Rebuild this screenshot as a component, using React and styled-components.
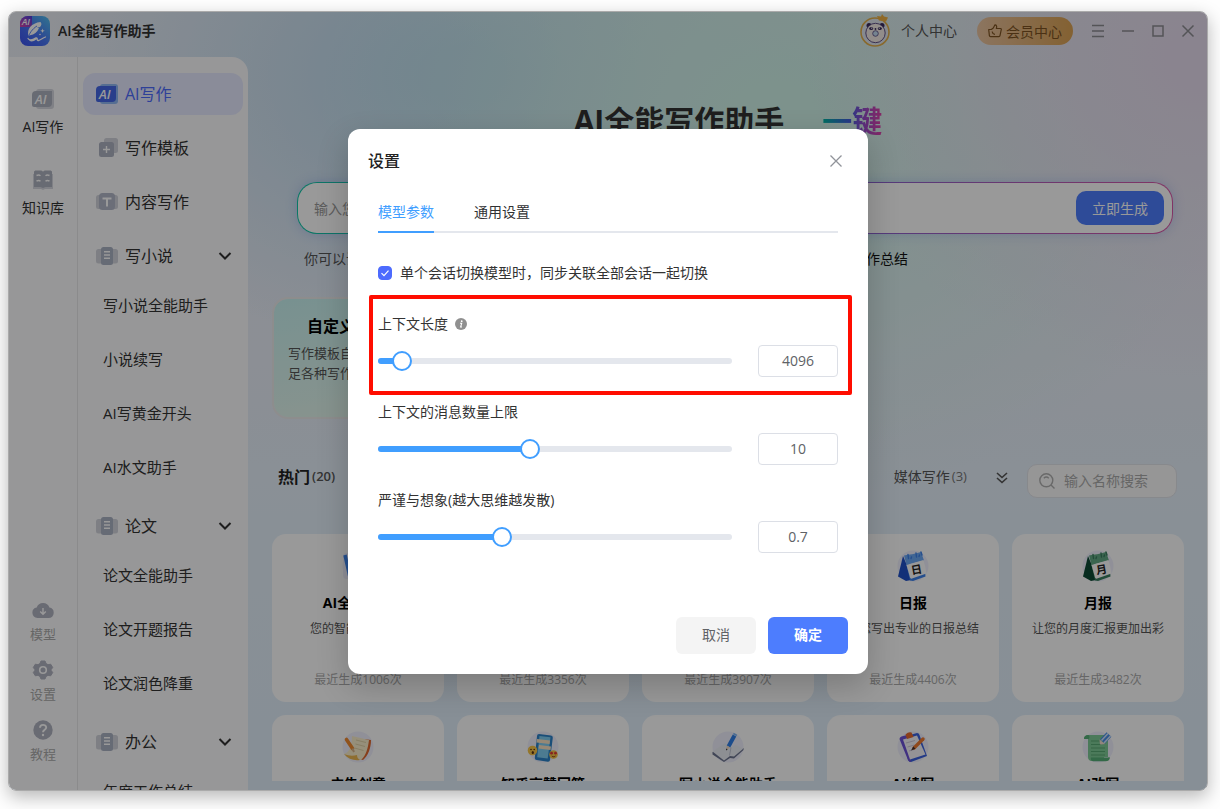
import React, { useState } from 'react';
import styled, { createGlobalStyle, css } from 'styled-components';

const menuTop = [
  { icon: 'ai', label: 'AI写作', active: true },
  { icon: 'template', label: '写作模板' },
  { icon: 'text', label: '内容写作' },
];

const menuGroups = [
  { label: '写小说', items: ['写小说全能助手', '小说续写', 'AI写黄金开头', 'AI水文助手'] },
  { label: '论文', items: ['论文全能助手', '论文开题报告', '论文润色降重'] },
  { label: '办公', items: ['年度工作总结'] },
];

const tips = ['写一篇公众号推文', '生成短视频脚本稿', '小红书的种草文案', '季度部门工作总结'];

const templates = [
  { title: '自定义写作模板', text: '写作模板自定义生成，满足各种写作需求' },
  { title: '全能写作模板', text: '海量写作模板，一键生成优质内容' },
  { title: '热门写作模板', text: '精选热门模板，轻松完成写作' },
];

const categories = [
  { name: '热门', count: 20, active: true },
  { name: '职场办公', count: 12 },
  { name: '论文写作', count: 8 },
  { name: '小说创作', count: 6 },
  { name: '媒体写作', count: 3 },
];

const tools = [
  { icon: 'word', title: 'AI全能助手', text: '您的智能写作助手', used: 1006 },
  { icon: 'book', title: '工作总结', text: '快速生成工作总结', used: 3356 },
  { icon: 'notes', title: '周报', text: '帮您写出专业的周报总结', used: 3907 },
  { icon: 'day', title: '日报', text: '帮您写出专业的日报总结', used: 4406 },
  { icon: 'month', title: '月报', text: '让您的月度汇报更加出彩', used: 3482 },
  { icon: 'notes', title: '广告创意' },
  { icon: 'phone', title: '知乎高赞回答' },
  { icon: 'book', title: '写小说全能助手' },
  { icon: 'clipboard', title: 'AI续写' },
  { icon: 'scroll', title: 'AI改写' },
];

const settings = [
  { id: 'context', label: '上下文长度', min: 1024, max: 46080, step: 1, info: true, marked: true },
  { id: 'messages', label: '上下文的消息数量上限', min: 1, max: 22, step: 1 },
  { id: 'temperature', label: '严谨与想象(越大思维越发散)', min: 0, max: 2, step: 0.1 },
];

export default function App() {
  const [values, setValues] = useState({ context: 4096, messages: 10, temperature: 0.7 });
  const [sync, setSync] = useState(true);

  const handleChange = (e) => {
    const { name, value } = e.target;
    setValues({ ...values, [name]: value });
  };

  return (
    <Page>
      <GlobalStyle />
      <Window>
        <TitleBar>
          <Logo />
          <AppName>AI全能写作助手</AppName>
          <Avatar />
          <TextButton>个人中心</TextButton>
          <VipButton><ThumbIcon />会员中心</VipButton>
          <WindowButtons>
            <WindowButton aria-label="菜单"><svg width="14" height="14" viewBox="0 0 14 14"><path d="M1 1.5h12M1 7h12M1 12.5h12" /></svg></WindowButton>
            <WindowButton aria-label="最小化"><svg width="14" height="14" viewBox="0 0 14 14"><path d="M1 7h12" /></svg></WindowButton>
            <WindowButton aria-label="最大化"><svg width="14" height="14" viewBox="0 0 14 14"><path d="M2 2h10v10H2z" /></svg></WindowButton>
            <WindowButton aria-label="关闭"><svg width="14" height="14" viewBox="0 0 14 14"><path d="M1.5 1.5l11 11M12.5 1.5l-11 11" /></svg></WindowButton>
          </WindowButtons>
        </TitleBar>

        <Columns>
          <Rail>
            <RailButton $top><AiIcon color="#aeb2c0" back="#d6d8e0" />AI写作</RailButton>
            <RailButton $top><LibraryIcon />知识库</RailButton>
            <RailBottom>
              <RailButton><CloudIcon />模型</RailButton>
              <RailButton><GearIcon />设置</RailButton>
              <RailButton><HelpIcon />教程</RailButton>
            </RailBottom>
          </Rail>

          <Menu>
            {menuTop.map((item) => (
              <MenuItem key={item.label} $active={item.active}>
                <MenuIcon name={item.icon} />
                <span>{item.label}</span>
              </MenuItem>
            ))}
            {menuGroups.map((group) => (
              <div key={group.label}>
                <MenuItem $group>
                  <MenuIcon name="doc" />
                  <span>{group.label}</span>
                  <Chevron width="14" height="14" viewBox="0 0 14 14">
                    <path d="M1.5 4L7 9.5 12.500 4" />
                  </Chevron>
                </MenuItem>
                <SubMenu>
                  {group.items.map((name) => <SubItem key={name}>{name}</SubItem>)}
                </SubMenu>
              </div>
            ))}
          </Menu>

          <Main>
            <Hero>AI全能写作助手<HeroAccent>一键</HeroAccent></Hero>
            <Prompt>
              <PromptInput aria-label="写作主题" placeholder="输入您想写的主题" />
              <PromptButton>立即生成</PromptButton>
            </Prompt>
            <Tips>
              <span>你可以试试：</span>
              {tips.map((tip) => <a href="#tip" key={tip}>{tip}</a>)}
            </Tips>
            <Templates>
              {templates.map((item) => (
                <Template key={item.title}>
                  <h3>{item.title}</h3>
                  <p>{item.text}</p>
                </Template>
              ))}
            </Templates>
            <FilterRow>
              <Categories>
                {categories.map((item) => (
                  <Category key={item.name} $active={item.active}>
                    {item.name}<small>({item.count})</small>
                  </Category>
                ))}
              </Categories>
              <MoreButton aria-label="更多">
                <svg width="14" height="14" viewBox="0 0 14 14"><path d="M2 2l5 4.500L12 2M2 7l5 4.500L12 7" /></svg>
              </MoreButton>
              <SearchBox>
                <svg width="16" height="16" viewBox="0 0 16 16">
                  <circle cx="7.300" cy="7.300" r="6.500" />
                  <path d="M12 12l3.500 3.500M4.800 5.200a3.600 3.600 0 0 1 5 0" />
                </svg>
                <input aria-label="搜索" placeholder="输入名称搜索" />
              </SearchBox>
            </FilterRow>
            <ToolGrid>
              {tools.map((tool) => (
                <Tool key={tool.title}>
                  <ToolIcon name={tool.icon} />
                  <h4>{tool.title}</h4>
                  {tool.text && <p>{tool.text}</p>}
                  {tool.used && <small>最近生成{tool.used}次</small>}
                </Tool>
              ))}
            </ToolGrid>
          </Main>
        </Columns>

        <Overlay>
          <Dialog role="dialog" aria-label="设置">
            <DialogHeader>
              <h2>设置</h2>
              <CloseButton aria-label="关闭设置">
                <svg width="12" height="12" viewBox="0 0 12 12"><path d="M0.500 0.500l11 11M11.500 0.500l-11 11" /></svg>
              </CloseButton>
            </DialogHeader>
            <DialogBody>
              <Tabs>
                <Tab $active>模型参数</Tab>
                <Tab>通用设置</Tab>
              </Tabs>
              <CheckRow>
                <input type="checkbox" checked={sync} onChange={() => setSync(!sync)} />
                单个会话切换模型时，同步关联全部会话一起切换
              </CheckRow>
              {settings.map((item) => (
                <Setting key={item.id}>
                  <SettingLabel htmlFor={item.id}>
                    {item.label}
                    {item.info && <InfoIcon />}
                  </SettingLabel>
                  <SettingRow>
                    <Slider>
                      <Fill style={{ width: `${((values[item.id] - item.min) / (item.max - item.min)) * 100}%` }} />
                      <input
                        type="range"
                        id={item.id}
                        name={item.id}
                        min={item.min}
                        max={item.max}
                        step={item.step}
                        value={values[item.id]}
                        onChange={handleChange}
                      />
                    </Slider>
                    <NumberInput name={item.id} aria-label={item.label} value={values[item.id]} onChange={handleChange} />
                  </SettingRow>
                  {item.marked && <Marker />}
                </Setting>
              ))}
            </DialogBody>
            <DialogFooter>
              <DialogButton>取消</DialogButton>
              <DialogButton $primary>确定</DialogButton>
            </DialogFooter>
          </Dialog>
        </Overlay>
      </Window>
    </Page>
  );
}

function Logo() {
  return (
    <svg width="30" height="30" viewBox="0 0 30 30">
      <defs>
        <linearGradient id="logoBg" x1="0" y1="1" x2="1" y2="0">
          <stop offset="0" stopColor="#3c50f0" />
          <stop offset="0.500" stopColor="#4a78f5" />
          <stop offset="1" stopColor="#52c4f0" />
        </linearGradient>
        <linearGradient id="logoTag" x1="0" y1="1" x2="1" y2="0">
          <stop offset="0" stopColor="#d845a8" />
          <stop offset="1" stopColor="#4a3fe0" />
        </linearGradient>
        <clipPath id="logoClip"><rect width="30" height="30" rx="8" /></clipPath>
      </defs>
      <g clipPath="url(#logoClip)">
        <rect width="30" height="30" fill="url(#logoBg)" />
        <path d="M0 0h12v8a3 3 0 0 1-3 3H0z" fill="url(#logoTag)" />
        <path d="M8.500 20c-2-7 3-13 12-14 1.500 1.500 1 3.500-.5 5l-3 .7 2 .6c-2 4-4.500 6.300-9 7z" fill="#fff" />
        <path d="M8 22c1-4 4-9 9-12" stroke="#4a78f5" strokeWidth="0.900" fill="none" />
        <path d="M8 22.500c2 3.500 6 0 8-.5 2.500-.5 0 3 2.500 2.500 2-.4 4-2.500 7-3.500M10 24.500c2 .8 4 0 6-1.500" stroke="#fff" strokeWidth="1.300" fill="none" strokeLinecap="round" />
        <path d="M22.500 12.500l.6 1.700 1.700.6-1.700.6-.6 1.700-.6-1.700-1.700-.6 1.700-.6z" fill="#fff" />
        <circle cx="20" cy="18.500" r="0.800" fill="#fff" />
        <text x="2" y="9" fontSize="9" fontWeight="600" fontStyle="italic" fill="#fff">AI</text>
      </g>
    </svg>
  );
}

function Avatar() {
  return (
    <svg width="32" height="36" viewBox="0 0 32 36">
      <circle cx="16" cy="19" r="14" fill="#dfe6ee" stroke="#e3b04c" strokeWidth="1.600" />
      <circle cx="10" cy="12.500" r="2.500" fill="#3a2a5c" />
      <circle cx="23" cy="12.500" r="2.500" fill="#3a2a5c" />
      <circle cx="16.500" cy="20" r="9.700" fill="#f3ece6" stroke="#51407a" strokeWidth="0.900" />
      <ellipse cx="12.200" cy="15.500" rx="2" ry="1.600" fill="#3a2a5c" />
      <ellipse cx="20.800" cy="15.500" rx="2" ry="1.600" fill="#3a2a5c" />
      <circle cx="12.700" cy="15.200" r="0.600" fill="#fff" />
      <circle cx="20.300" cy="15.200" r="0.600" fill="#fff" />
      <circle cx="16.500" cy="16" r="0.900" fill="#3a2a5c" />
      <circle cx="16.500" cy="20.500" r="2.800" fill="#c3dcf0" stroke="#51407a" strokeWidth="0.800" />
      <path d="M18 3l4 .5 1-2.500 2 2.500 4 1-2 4-7-1z" fill="#eeb044" />
    </svg>
  );
}

function ThumbIcon() {
  return (
    <svg width="14" height="14" viewBox="0 0 14 14" fill="none" stroke="#7d5322" strokeWidth="1.200" strokeLinejoin="round">
      <path d="M.7 5.500h2.600l2-1.500L7 .8c1.600 0 2 1.500 1.300 3.700h4.200c.7 0 .9.500.8 1L12 11.700c-.1.600-.5.900-1.100.900H2.500c-.6 0-1-.3-1.100-.9z" />
      <path d="M4.200 7.500c.3 2 1.300 2.800 2.800 2.800" />
    </svg>
  );
}

function AiIcon({ color, back }) {
  return (
    <svg width="24" height="22" viewBox="0 0 24 22">
      <rect x="5" y="1" width="18" height="20" rx="3" fill={back} />
      <path d="M5 3h16v12a4 4 0 0 1-4 4H3a2 2 0 0 1-2-2V7a4 4 0 0 1 4-4z" fill={color} />
      <text x="4" y="16" fontSize="13" fontWeight="600" fontStyle="italic" fill="#fff">AI</text>
    </svg>
  );
}

function LibraryIcon() {
  return (
    <svg width="24" height="22" viewBox="0 0 24 22">
      <path d="M2 5h20v15h-8l-2 1-2-1H2z" fill="#d6d8e0" />
      <path d="M3 3c0-1 1-1.500 2-1.500h4c1.500 0 2.500.5 3 1.300.5-.8 1.500-1.300 3-1.300h4c1 0 2 .5 2 1.500V18h-6.500l-2.500 1-2.500-1H3z" fill="#aeb2c0" />
      <path d="M5.500 6.500c1.500-.7 3-.7 4 .2M5.500 12c1.500-.7 3-.7 4 .2M14.500 6.700c1-.9 2.500-.9 4-.2M14.500 12.200c1-.9 2.500-.9 4-.2" stroke="#fff" strokeWidth="1.400" fill="none" />
    </svg>
  );
}

function CloudIcon() {
  return (
    <svg width="22" height="20" viewBox="0 0 22 20">
      <path d="M5.500 18a5.300 5.300 0 0 1-.8-10.500 6.700 6.700 0 0 1 12.700 0A5.300 5.300 0 0 1 16.500 18z" fill="#b0b2c0" />
      <path d="M11 8v6M8.200 11.500L11 14.300l2.800-2.800" stroke="#fff" strokeWidth="1.400" fill="none" />
    </svg>
  );
}

function GearIcon() {
  return (
    <svg width="22" height="20" viewBox="0 0 22 20">
      <path d="M9 1h4l1 2.500 2 1.200 2.700-.5 2 3.300-1.500 2v1l1.500 2-2 3.300-2.700-.5-2 1.200-1 2.500H9l-1-2.500-2-1.200-2.700.5-2-3.300 1.500-2v-1l-1.500-2 2-3.300 2.700.5 2-1.200z" fill="#b0b2c0" stroke="#b0b2c0" strokeLinejoin="round" />
      <circle cx="11" cy="10" r="3.300" fill="none" stroke="#fff" strokeWidth="1.600" />
    </svg>
  );
}

function HelpIcon() {
  return (
    <svg width="22" height="20" viewBox="0 0 22 20">
      <circle cx="11" cy="10" r="9.700" fill="#b0b2c0" />
      <path d="M8 7.800c0-4 6.200-3.800 6.200-.3 0 2.200-3.200 2.300-3.200 4.700" stroke="#fff" strokeWidth="1.900" fill="none" />
      <circle cx="11" cy="15" r="1.200" fill="#fff" />
    </svg>
  );
}

function MenuIcon({ name }) {
  if (name === 'ai') return <AiIcon color="#4568e8" back="#8fb8f4" />;
  return (
    <svg width="24" height="22" viewBox="0 0 24 22">
      {name === 'template' && (
        <>
          <rect x="9" y="1" width="14" height="15" rx="2.500" fill="#d2d4dc" />
          <rect x="4" y="5" width="15" height="15" rx="2.500" fill="#aeb2c2" />
          <path d="M11.500 9v7M8 12.500h7" stroke="#fff" strokeWidth="1.400" />
        </>
      )}
      {name === 'text' && (
        <>
          <rect x="1" y="4" width="22" height="14" rx="2.500" fill="#d2d4dc" />
          <rect x="4" y="2" width="16" height="17" rx="3.500" fill="#b2b7c8" />
          <path d="M7.500 7.500h9M12 7.500v8" stroke="#fff" strokeWidth="2" />
        </>
      )}
      {name === 'doc' && (
        <>
          <rect x="1" y="4" width="22" height="14.500" rx="2.500" fill="#d2d4dc" />
          <rect x="6" y="2" width="12" height="18" rx="2.500" fill="#aab2c4" />
          <path d="M9 6.800h6M9 10h6M9 13.200h6" stroke="#fff" strokeWidth="1.500" />
        </>
      )}
    </svg>
  );
}

function InfoIcon() {
  return (
    <svg width="12" height="12" viewBox="0 0 12 12">
      <circle cx="6" cy="6" r="6" fill="#909090" />
      <circle cx="6.700" cy="3.200" r="0.900" fill="#fff" />
      <path d="M5 5.300h1.700L5.600 9H7" stroke="#fff" strokeWidth="1.100" fill="none" />
    </svg>
  );
}

function Calendar({ dark, mid, light, sign }) {
  return (
    <>
      <path d="M6 6L1 26.500 9 31l5-1L9 13z" fill={dark} />
      <path d="M9 13l4 17.500 3 .5 12.500-4.500L28 22z" fill={mid} />
      <path d="M7 5.500c5-1 11-1.500 17-3.500l3 8.500L9.500 15z" fill={light} />
      <path d="M9.500 15L26.500 10q2 7 3 13.500L15 28.500q-1.500.5-2-1z" fill="#fff" />
      <path d="M11 4.500l.5 4M14 8.500l.5-1.500M19 3l.5 4M22 6.500l.5-1.500M24 2l1 3" stroke={mid} strokeWidth="1.400" strokeLinecap="round" />
      <text x="14" y="23.500" fontSize="11" fontWeight="700" fill="#222" transform="rotate(-10 20 19)">{sign}</text>
    </>
  );
}

function ToolIcon({ name }) {
  return (
    <svg width="32" height="32" viewBox="0 0 32 32">
      <circle cx="16" cy="16" r="15.500" fill="#f0f1fd" />
      {name === 'day' && <Calendar dark="#1f50c8" mid="#3c82ec" light="#6ca8f6" sign="日" />}
      {name === 'month' && <Calendar dark="#0c4a34" mid="#3a7e60" light="#62a884" sign="月" />}
      {name === 'word' && (
        <>
          <rect x="1" y="3" width="28" height="26" rx="4" fill="#f0f1fd" />
          <path d="M3 5l4 18 6-12 4 12 5-18" stroke="#3f86ee" strokeWidth="3.500" fill="none" />
        </>
      )}
      {name === 'notes' && (
        <>
          <path d="M22 8l7 1c0 8-3 16-8 20l-4-1z" fill="#e0682e" />
          <path d="M10 5l17 4c-1 8-3 16-8 20-6-1-12-2-17-6 5-1 8-8 8-18z" fill="#fbeecb" />
          <path d="M2 23c5 2 9 2 13 1 0 2 1 4 3 5-6 1-12-1-16-6z" fill="#edb850" />
          <path d="M14 9l10 2.500M13.500 13l9.500 2.500M12.500 17l9 2.500" stroke="#e0d2a8" strokeWidth="1" />
          <path d="M4.500 8.500l6 9" stroke="#f08a30" strokeWidth="3.600" strokeLinecap="round" />
          <path d="M10.500 17.500l1.500 3.500" stroke="#d8b48c" strokeWidth="2" />
        </>
      )}
      {name === 'phone' && (
        <>
          <path d="M12 3l12 1.500a2 2 0 0 1 1.800 2.200L23 29a2 2 0 0 1-2.200 1.800L9.500 29a2 2 0 0 1-1.700-2.300L10 5a2 2 0 0 1 2-2z" fill="#2c83c8" />
          <path d="M12.500 5l11 1.300-2.800 21.200-10.500-1.300z" fill="#7fcdf2" />
          <path d="M10 8l13 1.500-.5 3.500-13-1.500zM12 14l12 1.500-.5 3.500-12-1.500z" fill="#fbe3c4" />
          <circle cx="5.500" cy="19.500" r="4.800" fill="#f7c548" />
          <circle cx="26.500" cy="23.500" r="4.300" fill="#f7c548" />
          <circle cx="4" cy="18.500" r="0.800" fill="#5a3210" />
          <circle cx="7.200" cy="18.500" r="0.800" fill="#5a3210" />
          <ellipse cx="5.800" cy="21.500" rx="1.100" ry="1.500" fill="#5a3210" />
          <circle cx="24.600" cy="22.200" r="1.400" fill="#e33a38" />
          <circle cx="28.500" cy="22.200" r="1.400" fill="#e33a38" />
          <path d="M24.800 25c1 1 2.600 1 3.600 0" stroke="#8a3010" strokeWidth="1" fill="none" />
        </>
      )}
      {name === 'book' && (
        <>
          <path d="M.5 21v2.500L12 31l6-4 4 .5L31.500 19v-2z" fill="#6d7590" />
          <path d="M.5 20.500L13 12l6 4 5-2 7.500 3.500L22 25.500l-4-.5-6 4.500z" fill="#eceef6" />
          <path d="M19 16.500l-1.500 8" stroke="#c2c7d6" strokeWidth="1" fill="none" />
          <path d="M22.500 4.500l-6 11" stroke="#2f7fe8" strokeWidth="4" />
          <path d="M23.500 2.800l-.8 1.500" stroke="#7fb6f6" strokeWidth="4" />
          <path d="M14.800 14.500l3.400 2-4 2.500z" fill="#f0d8c0" />
          <path d="M14 17.500l.2 2 1.500-.9z" fill="#333" />
        </>
      )}
      {name === 'clipboard' && (
        <>
          <path d="M6 6L20 2q2 0 2.500 2L30 25 14 31q-2 0-3-2z" fill="#3b62e0" />
          <path d="M2.500 8q0-2 2-2.500L10 4l4 27q-2 0-3-2z" fill="#6c50d8" />
          <path d="M6 8.500L20 4.500l8.500 19-15.500 5z" fill="#f7f5fa" />
          <path d="M8.500 3.500q3-3 6-2l2 4.500-6.500 2z" fill="#e8692c" />
          <path d="M9 12l9-2.500M10.500 16l7-2M12 20l5-1.500" stroke="#cfc9da" strokeWidth="1" />
          <path d="M26 8L17 17" stroke="#ee7a30" strokeWidth="3.400" strokeLinecap="round" />
          <path d="M16.300 15.500l2.200 2.200-4.500 1.800z" fill="#403030" />
        </>
      )}
      {name === 'scroll' && (
        <>
          <path d="M2 8c0-3 2-4 4-4h18c-2 1-2 2-2 4v18c0 2 2 2 5.500 0-.5 3-2 4-4.500 4H10c-3 0-4-2-4-4V8z" fill="#7ecb96" />
          <path d="M2 8c0-3 2-4 4-4 1.500 0 2 2 1 4zM9 26.500h19c-.5 3-2 3.700-4.500 3.700H11c-2 0-2.500-2-2-3.700z" fill="#56b077" />
          <path d="M22 9l4-1v18h-4z" fill="#7ecb96" />
          <path d="M9 10h9M9 13.500h10M9 17h14M9 20.500h14M9 24h14" stroke="#58a873" strokeWidth="1" />
          <path d="M27 3.500l-6.500 7" stroke="#4a90ea" strokeWidth="6.500" />
          <path d="M26 2.500l-6.500 7" stroke="#d5e6fb" strokeWidth="1.500" />
          <path d="M28.500 5l-6.500 7" stroke="#d5e6fb" strokeWidth="1.500" />
          <path d="M17.500 8.500l5.500 4.500-5 .5z" fill="#f4ded2" />
        </>
      )}
    </svg>
  );
}

const GlobalStyle = createGlobalStyle`
  * {
    box-sizing: border-box;
  }

  body {
    margin: 0;
    background: #fefefe;
    font-family: 'Open Sans', 'Noto Sans CJK SC', sans-serif;
    font-size: 14px;
    color: #333;
  }

  h2, h3, h4, p {
    margin: 0;
  }

  button, input {
    font: inherit;
    color: inherit;
    margin: 0;
    padding: 0;
    border: none;
    background: none;
    outline: none;
  }

  button {
    cursor: pointer;
    white-space: nowrap;
  }

  a {
    color: inherit;
    text-decoration: none;
  }

  svg {
    flex: none;
  }
`;

const Page = styled.div`
  height: 100vh;
  padding: 11px 12px 18px 8px;
  overflow: hidden;
`;

const Window = styled.div`
  position: relative;
  display: flex;
  flex-direction: column;
  height: 100%;
  border: 1px solid #aaa;
  border-radius: 8px;
  overflow: hidden;
  box-shadow: 0 6px 18px rgba(0, 0, 0, 0.28);
  background:
    radial-gradient(ellipse 400px 320px at 100% 6%, #e6dcee 5%, rgba(230, 220, 238, 0) 100%),
    radial-gradient(ellipse 460px 380px at 64% 14%, #d0f3ea 10%, rgba(208, 243, 234, 0) 100%),
    radial-gradient(ellipse 420px 280px at 38% 8%, #bcdaee 10%, rgba(188, 218, 238, 0) 100%),
    linear-gradient(180deg, #ebeef6 0%, #e9eef8 45%, #e5f1fb 65%, #e1eefb 100%);
`;

const TitleBar = styled.header`
  display: flex;
  align-items: center;
  height: 45px;
  padding: 0 4px 7px 11px;
`;

const AppName = styled.span`
  margin: 0 auto 0 8px;
  padding-bottom: 2px;
  font-weight: 600;
`;

const TextButton = styled.button`
  margin: 0 20px 0 10px;
  padding-bottom: 2px;
  color: #555;
`;

const VipButton = styled.button`
  display: flex;
  align-items: center;
  gap: 4px;
  height: 28px;
  padding: 0 11px;
  border-radius: 14px;
  background: linear-gradient(90deg, #e9c3a0, #dba254);
  color: #7d5322;
`;

const WindowButtons = styled.div`
  display: flex;
  margin-left: 10px;
`;

const WindowButton = styled.button`
  display: grid;
  place-items: center;
  width: 30px;
  height: 30px;

  svg {
    fill: none;
    stroke: #8c8c92;
    stroke-width: 1.5;
  }
`;

const Columns = styled.div`
  display: flex;
  flex: 1;
  min-height: 0;
`;

const Rail = styled.nav`
  display: flex;
  flex-direction: column;
  gap: 23px;
  width: 69px;
  padding: 31px 0 26px;
  border-right: 1px solid #e8e8ea;
  background: #fcfcfd;
`;

const RailButton = styled.button`
  display: flex;
  flex-direction: column;
  align-items: center;
  width: 100%;
  gap: 4px;
  line-height: 20px;
  color: #aaa;
  font-size: 13px;

  ${(props) => props.$top && css`
    height: 58px;
    gap: 2px;
    line-height: 30px;
    color: #333;
    font-size: 14px;
  `}
`;

const RailBottom = styled.div`
  display: flex;
  flex-direction: column;
  gap: 16px;
  margin-top: auto;
`;

const Menu = styled.nav`
  width: 170px;
  padding: 16px 5px 0;
  border-top-right-radius: 16px;
  background: #fcfcfd;
  overflow: hidden;
`;

const MenuItem = styled.button`
  display: flex;
  align-items: center;
  gap: 6px;
  width: 100%;
  height: 42px;
  margin-bottom: ${(props) => (props.$group ? '0' : '12px')};
  padding: 0 11px 0 12px;
  border-radius: 12px;
  background: ${(props) => (props.$active ? '#e7eaff' : 'none')};
  color: ${(props) => (props.$active ? '#4d6bfe' : '#333')};
  font-size: 16px;

  span {
    padding-bottom: 2px;
  }
`;

const Chevron = styled.svg`
  margin-left: auto;
  fill: none;
  stroke: #333;
  stroke-width: 2;
`;

const SubMenu = styled.div`
  margin: 1px 0 11px;
`;

const SubItem = styled.button`
  display: block;
  width: 100%;
  height: 54px;
  padding: 0 0 2px 20px;
  font-size: 15px;
  text-align: left;
`;

const Main = styled.main`
  display: flex;
  flex-direction: column;
  flex: 1;
  min-width: 0;
  padding: 42px 23px 9px 24px;
`;

const Hero = styled.div`
  display: flex;
  justify-content: center;
  gap: 38px;
  line-height: 44px;
  font-size: 30px;
  font-weight: 700;
`;

const HeroAccent = styled.span`
  background: linear-gradient(90deg, #00b8a0, #3f5fe0 45%, #8a4fd0 65%, #e040a8);
  background-clip: text;
  color: transparent;
`;

const Prompt = styled.div`
  display: flex;
  align-items: center;
  height: 52px;
  margin: 39px 11px 0 25px;
  padding: 0 8px 0 16px;
  border: 1px solid transparent;
  border-radius: 20px;
  background:
    linear-gradient(#fff, #fff) padding-box,
    linear-gradient(90deg, #10c8a8, #6a68e0 50%, #d858a8) border-box;
  box-shadow: 0 0 12px rgba(90, 130, 230, 0.3);
`;

const PromptInput = styled.input`
  flex: 1;
  min-width: 0;

  &::placeholder {
    color: #999;
  }
`;

const PromptButton = styled.button`
  width: 88px;
  height: 34px;
  border-radius: 10px;
  background: #4d7dfe;
  color: #fff;
`;

const Tips = styled.div`
  display: flex;
  gap: 18px;
  margin: 15px 0 0 32px;
  line-height: 20px;
  white-space: nowrap;
  color: #555;

  a {
    color: #111;
  }
`;

const Templates = styled.div`
  display: flex;
  gap: 15px;
  margin-top: 28px;
`;

const Template = styled.article`
  width: 182px;
  height: 122px;
  padding: 15px 14px;
  border: 2px solid #ecebeb;
  border-radius: 16px;
  background: linear-gradient(170deg, #c8f2f1, #e6f6ec) padding-box;

  h3 {
    color: #000;
    font-size: 16px;
    line-height: 24px;
    text-align: center;
  }

  p {
    margin-top: 5px;
    color: #555;
    font-size: 13px;
    line-height: 20px;
  }
`;

const FilterRow = styled.div`
  display: flex;
  align-items: flex-start;
  margin: 45px 7px 0 6px;
`;

const Categories = styled.div`
  display: flex;
  flex: 1;
  justify-content: space-between;
`;

const Category = styled.button`
  display: flex;
  align-items: center;
  gap: 2px;
  height: 26px;
  padding-bottom: 2px;
  color: #555;

  small {
    font-size: 13px;
    color: #777;
  }

  ${(props) => props.$active && css`
    color: #222;
    font-size: 16px;
    font-weight: 600;

    small {
      color: #555;
    }
  `}
`;

const MoreButton = styled.button`
  display: grid;
  place-items: center;
  width: 14px;
  height: 28px;
  margin: 0 18px 0 28px;

  svg {
    fill: none;
    stroke: #555;
    stroke-width: 1.6;
  }
`;

const SearchBox = styled.label`
  display: flex;
  align-items: center;
  gap: 9px;
  width: 150px;
  height: 34px;
  padding: 0 11px;
  border: 1px solid #e2e4ea;
  border-radius: 10px;
  background: #fafafa;

  svg {
    fill: none;
    stroke: #b0b0b0;
    stroke-width: 1.4;
  }

  input {
    width: 100%;
    min-width: 0;
    padding-bottom: 2px;
  }

  input::placeholder {
    color: #aaa;
  }
`;

const ToolGrid = styled.div`
  display: grid;
  flex: 1;
  grid-template-columns: repeat(5, 1fr);
  grid-auto-rows: 168px;
  gap: 13px;
  min-height: 0;
  margin-top: 36px;
  overflow: hidden;
`;

const Tool = styled.article`
  display: flex;
  flex-direction: column;
  align-items: center;
  padding: 16px 8px 12px;
  border-radius: 14px;
  background: #fff;
  line-height: 20px;

  h4 {
    margin-top: 11px;
    color: #000;
    font-size: 14px;
  }

  p {
    margin-top: 6px;
    color: #555;
    font-size: 12px;
    white-space: nowrap;
  }

  small {
    margin-top: auto;
    color: #aaa;
    font-size: 12px;
  }
`;

const Overlay = styled.div`
  position: absolute;
  inset: 0;
  display: flex;
  align-items: center;
  justify-content: center;
  background: rgba(0, 0, 0, 0.4);
`;

const Dialog = styled.section`
  width: 520px;
  padding: 20px 0;
  border-radius: 12px;
  background: #fff;
  box-shadow: 0 12px 32px rgba(0, 0, 0, 0.2);
`;

const DialogHeader = styled.header`
  display: flex;
  align-items: center;
  justify-content: space-between;
  padding: 0 20px;

  h2 {
    font-size: 16px;
    font-weight: 500;
    line-height: 24px;
    color: #222;
  }
`;

const CloseButton = styled.button`
  display: grid;
  place-items: center;
  width: 24px;
  height: 24px;

  svg {
    fill: none;
    stroke: #909399;
    stroke-width: 1.3;
  }
`;

const DialogBody = styled.div`
  padding: 20px 30px 0;
`;

const Tabs = styled.div`
  display: flex;
  gap: 40px;
  height: 40px;
  border-bottom: 2px solid #e4e7ed;
`;

const Tab = styled.button`
  height: 40px;
  padding-bottom: 2px;
  border-bottom: 2px solid ${(props) => (props.$active ? '#409eff' : 'transparent')};
  color: ${(props) => (props.$active ? '#409eff' : '#303133')};
`;

const CheckRow = styled.label`
  display: flex;
  align-items: center;
  gap: 8px;
  margin: 30px 0 31px;
  line-height: 20px;

  input {
    appearance: none;
    width: 14px;
    height: 14px;
    border: 1px solid #4d6bfe;
    border-radius: 4px;
  }

  input:checked {
    background: #4d6bfe url("data:image/svg+xml,%3Csvg xmlns='http://www.w3.org/2000/svg' viewBox='0 0 12 12'%3E%3Cpath d='M2.500 6.200l2.500 2.500 4.500-5' fill='none' stroke='white' stroke-width='1.200'/%3E%3C/svg%3E");
  }
`;

const Setting = styled.div`
  position: relative;

  & + & {
    margin-top: 25px;
  }
`;

const SettingLabel = styled.label`
  display: flex;
  align-items: center;
  gap: 7px;
  line-height: 20px;
`;

const SettingRow = styled.div`
  display: flex;
  align-items: center;
  gap: 26px;
  margin-top: 11px;
`;

const Slider = styled.div`
  position: relative;
  flex: 1;
  height: 6px;
  border-radius: 3px;
  background: #e4e7ed;

  input {
    position: absolute;
    top: -7px;
    left: -10px;
    width: calc(100% + 20px);
    height: 20px;
    appearance: none;
    cursor: pointer;
  }

  input::-webkit-slider-thumb {
    appearance: none;
    width: 20px;
    height: 20px;
    border: 2px solid #409eff;
    border-radius: 50%;
    background: #fff;
  }
`;

const Fill = styled.div`
  height: 6px;
  border-radius: 3px 0 0 3px;
  background: #409eff;
`;

const NumberInput = styled.input`
  width: 80px;
  height: 32px;
  border: 1px solid #dcdfe6;
  border-radius: 4px;
  color: #606266;
  text-align: center;
`;

/* Highlight frame around the context length setting */
const Marker = styled.div`
  position: absolute;
  inset: -19px -14px -18px -9px;
  border: 4px solid #ff0d00;
  border-radius: 2px;
  pointer-events: none;
`;

const DialogFooter = styled.footer`
  display: flex;
  justify-content: flex-end;
  gap: 12px;
  margin-top: 64px;
  padding: 0 20px;
`;

const DialogButton = styled.button`
  width: 80px;
  height: 37px;
  padding-bottom: 2px;
  border-radius: 6px;
  background: ${(props) => (props.$primary ? '#4d7dfe' : '#f4f4f4')};
  color: ${(props) => (props.$primary ? '#fff' : '#606266')};
  font-weight: ${(props) => (props.$primary ? '600' : '400')};
`;
